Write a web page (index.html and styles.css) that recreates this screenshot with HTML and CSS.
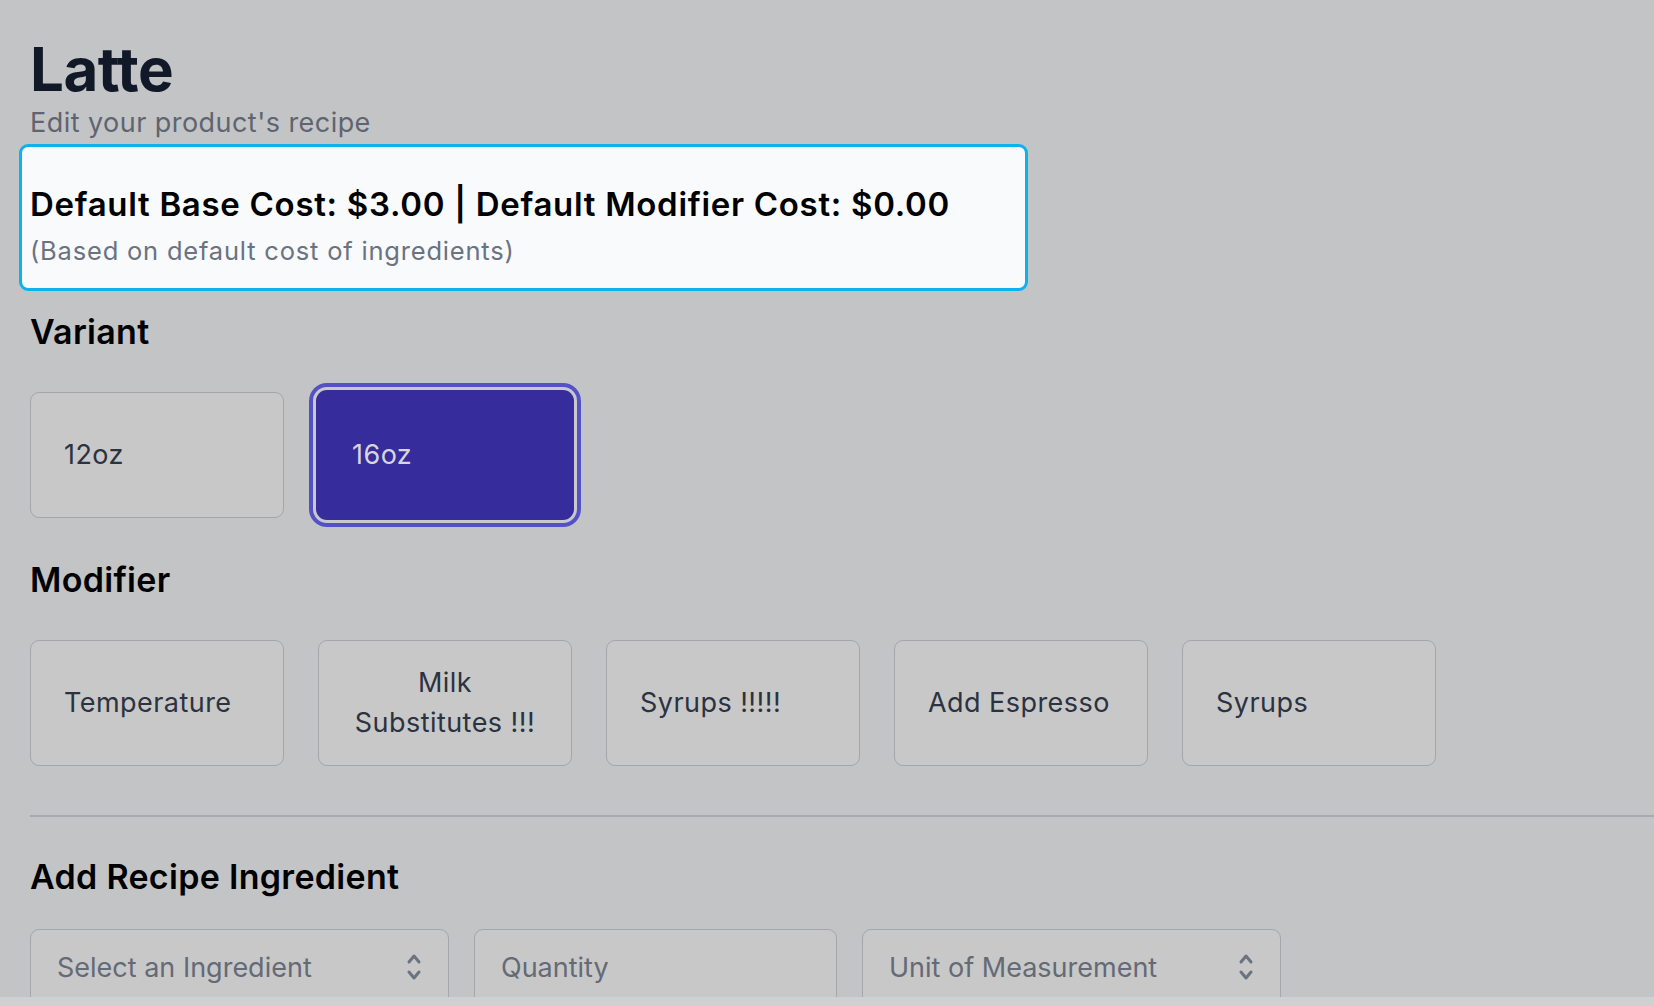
FILE: index.html
```html
<!DOCTYPE html>
<html lang="en">
<head>
  <meta charset="UTF-8">
  <title>Latte - Recipe</title>
  <link rel="stylesheet" href="styles.css">
</head>
<body>

  <main class="page">
    <h1 class="title">Latte</h1>
    <p class="subtitle">Edit your product's recipe</p>

    <!-- Cost summary -->
    <div class="cost-card">
      <p class="cost-main">Default Base Cost: $3.00 | Default Modifier Cost: $0.00</p>
      <p class="cost-note">(Based on default cost of ingredients)</p>
    </div>

    <h2 class="section-title">Variant</h2>
    <div class="option-row">
      <button class="option"><span>12oz</span></button>
      <button class="option selected"><span>16oz</span></button>
    </div>

    <h2 class="section-title">Modifier</h2>
    <div class="option-row">
      <button class="option"><span>Temperature</span></button>
      <button class="option"><span>Milk Substitutes !!!</span></button>
      <button class="option"><span>Syrups !!!!!</span></button>
      <button class="option"><span>Add Espresso</span></button>
      <button class="option"><span>Syrups</span></button>
    </div>

    <hr class="divider">

    <h2 class="section-title">Add Recipe Ingredient</h2>
    <div class="ingredient-form">
      <div class="field select-field ingredient">
        <span>Select an Ingredient</span>
        <svg class="updown" width="16" height="28" viewBox="0 0 16 28">
          <polyline points="3,9 8,3 13,9" fill="none" stroke="#6b7280" stroke-width="3" stroke-linecap="round" stroke-linejoin="round"/>
          <polyline points="3,19 8,25 13,19" fill="none" stroke="#6b7280" stroke-width="3" stroke-linecap="round" stroke-linejoin="round"/>
        </svg>
      </div>
      <div class="field quantity">
        <span>Quantity</span>
      </div>
      <div class="field select-field unit">
        <span>Unit of Measurement</span>
        <svg class="updown" width="16" height="28" viewBox="0 0 16 28">
          <polyline points="3,9 8,3 13,9" fill="none" stroke="#6b7280" stroke-width="3" stroke-linecap="round" stroke-linejoin="round"/>
          <polyline points="3,19 8,25 13,19" fill="none" stroke="#6b7280" stroke-width="3" stroke-linecap="round" stroke-linejoin="round"/>
        </svg>
      </div>
    </div>
  </main>

  <div class="scrollbar"></div>

</body>
</html>
```

FILE: styles.css
```css
html, body {
  margin: 0;
  padding: 0;
  overflow: hidden;
}

body {
  font-family: Inter, 'Noto Sans', sans-serif;
  background: #c3c4c6;
  color: #111827;
  min-height: 100vh;
}

.page {
  padding: 33px 0 0 30px;
}

.title {
  margin: 0;
  font-size: 60px;
  line-height: 72px;
  font-weight: 700;
  color: #111827;
  letter-spacing: -0.5px;
}

.subtitle {
  margin: 0;
  font-size: 27px;
  line-height: 36px;
  letter-spacing: 0.45px;
  color: #5f6470;
}

.cost-card {
  width: 1009px;
  box-sizing: border-box;
  margin: 3px 0 0 -11px;
  padding: 35px 8px 19px;
  background: #f8fafc;
  border: 3px solid #0bb3ee;
  border-radius: 9px;
}

.cost-main {
  margin: 0 0 7px;
  font-size: 33px;
  line-height: 44px;
  font-weight: 600;
  letter-spacing: 0.7px;
  color: #000;
}

.cost-note {
  margin: 0;
  font-size: 25.5px;
  line-height: 36px;
  letter-spacing: 0.8px;
  color: #6b7280;
}

.section-title {
  margin: 0;
  font-size: 34px;
  line-height: 44px;
  font-weight: 600;
  letter-spacing: 0.3px;
  color: #000;
}

.cost-card + .section-title {
  margin-top: 19px;
}

.option-row {
  display: flex;
  gap: 34px;
  margin: 38px 0 40px;
}

.option {
  display: flex;
  align-items: center;
  width: 254px;
  height: 126px;
  box-sizing: border-box;
  padding: 0 33px;
  background: #c8c8c8;
  border: 1px solid #a3a6ab;
  border-radius: 9px;
  font-family: Inter, 'Noto Sans', sans-serif;
  font-size: 27px;
  line-height: 40px;
  letter-spacing: 0.45px;
  color: #2b3240;
  text-align: center;
  cursor: pointer;
}

.option.selected {
  background: #372c9b;
  border-color: #372c9b;
  color: #d6d6de;
  box-shadow: 0 0 0 2px #372c9b, 0 0 0 5px #c9c9cd, 0 0 0 9px #5451c6;
}

.divider {
  margin: 49px 0 38px;
  border: 0;
  border-top: 2px solid #a7aab0;
}

.ingredient-form {
  display: flex;
  gap: 25px;
  margin-top: 30px;
}

.field {
  display: flex;
  align-items: center;
  justify-content: space-between;
  height: 76px;
  box-sizing: border-box;
  padding: 0 26px 0 26px;
  background: #c8c8c8;
  border: 1px solid #a3a6ab;
  border-radius: 9px;
  font-size: 27px;
  color: #646a76;
}

.ingredient {
  width: 419px;
}

.quantity {
  width: 363px;
}

.unit {
  width: 419px;
}

.updown {
  flex-shrink: 0;
}

.scrollbar {
  position: fixed;
  left: 0;
  right: 0;
  bottom: 0;
  height: 9px;
  background: #cfd0d2;
}
```
